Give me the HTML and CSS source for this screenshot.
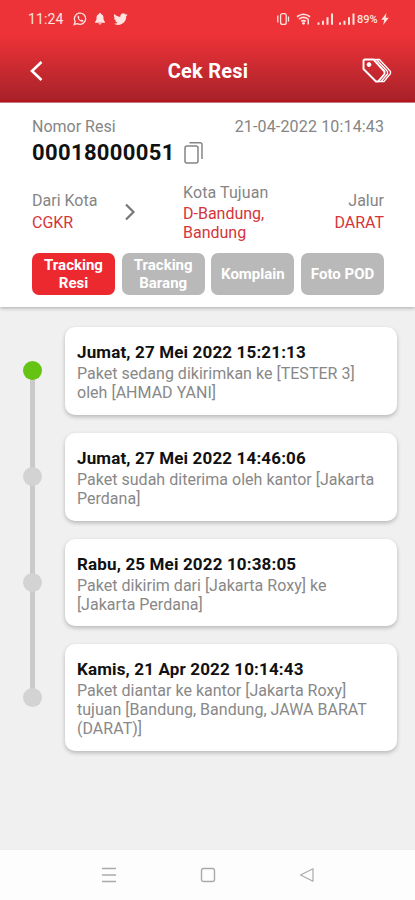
FILE: index.html
```html
<!DOCTYPE html>
<html lang="id">
<head>
<meta charset="utf-8">
<title>Cek Resi</title>
<link rel="stylesheet" href="styles.css">
</head>
<body>
<div class="app">
  <header class="top">
    <div class="status">
      <span class="clock">11:24</span>
      <svg class="apps" width="56" height="14" viewBox="0 0 56 14">
        <path d="M1.2 12.5l1-3A5.6 5.6 0 1 1 4.6 11.700z" fill="none" stroke="currentColor" stroke-width="1.300"/>
        <path d="M4.700 4.100q.4-.6 1-.4l.8 1.700-.6.900q.7 1.300 2 2l.9-.7 1.600.8c.1 1-1 1.600-2 1.400C6.100 9.100 4.200 6.600 4.700 4.100z" fill="currentColor"/>
        <path d="M27 1c.8 0 1 .5 1 1 2 .6 2.500 2.300 2.500 4.300 0 1.700.5 2.500 1.500 3.700v.7H22V10c1-1.200 1.500-2 1.500-3.700 0-2 .5-3.700 2.500-4.300 0-.5.2-1 1-1zM25.500 11.200h3a1.500 1.300 0 0 1-3 0z" fill="currentColor"/>
        <g transform="translate(40.500 .1) scale(.59)"><path d="M23.900 4.600a10 10 0 0 1-2.800.8 5 5 0 0 0 2.100-2.700 10 10 0 0 1-3.100 1.200A4.900 4.900 0 0 0 11.700 8.400 14 14 0 0 1 1.600 3.200a4.900 4.900 0 0 0 1.500 6.600 4.900 4.900 0 0 1-2.200-.6 4.900 4.900 0 0 0 3.900 4.900 5 5 0 0 1-2.200.1 4.900 4.900 0 0 0 4.600 3.400A9.900 9.900 0 0 1 0 19.500 14 14 0 0 0 21.500 7.100a10 10 0 0 0 2.400-2.500z" fill="currentColor"/></g>
      </svg>
      <svg class="signals" width="80" height="14" viewBox="0 0 80 14">
        <g fill="none" stroke="currentColor" stroke-width="1.300">
          <rect x="4.600" y="1.600" width="5.600" height="10.800" rx="2"/>
          <path d="M1.800 3.500v7M12.500 4.500v5"/>
          <path d="M21 4.700q6.500-4.900 13 0M23 7.100q4.500-3.300 9 0M25.200 9.300q2.300-1.500 4.600 0" stroke-width="1.700"/>
        </g>
        <g fill="currentColor">
          <circle cx="27.500" cy="11.300" r="1.400"/>
          <path d="M31.500 12.500V8l1.500-1.500v6z"/>
          <path d="M41.500 10.500h2v2.200h-2zM46 8.800h2v3.900h-2zM50.500 5.300h2v7.400h-2zM55 1.600h2v11.100h-2z"/>
          <path d="M63 10.500h2v2.200h-2zM67.500 8.800h2v3.900h-2zM72 5.300h2v7.400h-2zM76.500 1.600h2v11.100h-2z"/>
        </g>
      </svg>
      <span class="battery">89%</span>
      <svg class="bolt" width="8" height="12" viewBox="0 0 8 12"><path d="M5.500 0L.3 6.700h2.900L2.200 12 7.800 4.800H4.600z" fill="currentColor"/></svg>
    </div>
    <div class="bar">
      <svg width="14" height="22" viewBox="0 0 14 22"><path d="M12.500 2L3 11l9.500 9" fill="none" stroke="currentColor" stroke-width="2.600"/></svg>
      <h1>Cek Resi</h1>
      <svg width="32" height="28" viewBox="0 0 32 28" fill="none" stroke="currentColor" stroke-linejoin="round">
        <path d="M2.500 3.500l1-1h9L23.500 14.500v2.500l-6.500 7.500h-2L2.500 12z" stroke-width="1.900"/>
        <circle cx="8" cy="7.600" r="1.900" fill="currentColor" stroke-width="1"/>
        <path d="M13 2.500h2.500L26.500 14.500V17L20 24.500h-3M16 2.500h2.500l11 12v2L23 24.500h-3" stroke-width="1.300"/>
      </svg>
    </div>
  </header>

  <section class="summary">
    <div class="row head"><span class="label">Nomor Resi</span><span class="label date">21-04-2022 10:14:43</span></div>
    <div class="number">
      <strong>00018000051</strong>
      <svg width="20" height="24" viewBox="0 0 20 24" fill="none" stroke="#858585" stroke-width="1.500"><rect x="1" y="5" width="13" height="17" rx="2"/><path d="M5.500 1.700H16a2 2 0 0 1 2 2V18"/></svg>
    </div>
    <div class="route">
      <div class="from"><div class="label">Dari Kota</div><div class="place">CGKR</div></div>
      <svg class="arrow" width="12" height="18" viewBox="0 0 12 18"><path d="M2 1.500L9.500 9 2 16.500" fill="none" stroke="#777" stroke-width="2.200"/></svg>
      <div class="to"><div class="label">Kota Tujuan</div><div class="place">D-Bandung,<br>Bandung</div></div>
      <div class="via"><div class="label">Jalur</div><div class="place">DARAT</div></div>
    </div>
    <nav class="tabs">
      <button class="tab active">Tracking<br>Resi</button>
      <button class="tab">Tracking<br>Barang</button>
      <button class="tab">Komplain</button>
      <button class="tab">Foto POD</button>
    </nav>
  </section>

  <main class="timeline">
    <article class="event current"><div class="rail"><i class="dot"></i></div><div class="card"><h2>Jumat, 27 Mei 2022 15:21:13</h2><p>Paket sedang dikirimkan ke [TESTER 3]<br>oleh [AHMAD YANI]</p></div></article>
    <article class="event"><div class="rail"><i class="dot"></i></div><div class="card"><h2>Jumat, 27 Mei 2022 14:46:06</h2><p>Paket sudah diterima oleh kantor [Jakarta<br>Perdana]</p></div></article>
    <article class="event"><div class="rail"><i class="dot"></i></div><div class="card"><h2>Rabu, 25 Mei 2022 10:38:05</h2><p>Paket dikirim dari [Jakarta Roxy] ke<br>[Jakarta Perdana]</p></div></article>
    <article class="event"><div class="rail"><i class="dot"></i></div><div class="card"><h2>Kamis, 21 Apr 2022 10:14:43</h2><p>Paket diantar ke kantor [Jakarta Roxy]<br>tujuan [Bandung, Bandung, JAWA BARAT<br>(DARAT)]</p></div></article>
  </main>

  <footer class="softkeys">
    <svg width="16" height="18" viewBox="0 0 16 18" fill="none" stroke="#aaa" stroke-width="1.400"><path d="M1 2.500h14M1 9h14M1 15.500h14"/></svg>
    <svg width="16" height="18" viewBox="0 0 16 18" fill="none" stroke="#aaa" stroke-width="1.400"><rect x="1.500" y="2.500" width="13" height="13" rx="2"/></svg>
    <svg width="16" height="18" viewBox="0 0 16 18" fill="none" stroke="#aaa" stroke-width="1.200" stroke-linejoin="round"><path d="M14 2.800v12.400L1.500 9z"/></svg>
  </footer>
</div>
</body>
</html>
```
FILE: styles.css
```css
* { box-sizing: border-box; }
body { margin: 0; font-family: Roboto, "Liberation Sans", sans-serif; }
h1, h2, p { margin: 0; }
svg { display: block; flex: none; }
.app { width: 415px; height: 900px; display: flex; flex-direction: column; background: #f0f0f0; overflow: hidden; }

.top { height: 103px; flex: none; color: #fff; background: linear-gradient(#ee3338 0, #ee3338 34px, #aa222a 99px, #b5171f 100px, #b5171f 102px, #eee 103px); }
.status { height: 38px; display: flex; align-items: center; padding-left: 28px; color: #ffe3df; }
.clock { width: 45px; font-size: 14px; letter-spacing: .1px; }
.signals { margin-left: 147px; }
.battery { margin-left: 1px; width: 23px; font-size: 11px; letter-spacing: 0; font-weight: 500; white-space: nowrap; }
.bolt { margin-left: 1px; }
.bar { height: 65px; padding: 0 22px 0 29px; display: flex; align-items: center; justify-content: space-between; }
.bar h1 { font-size: 20px; line-height: 24px; font-weight: 700; letter-spacing: .25px; margin-left: 12px; }

.summary { height: 204px; flex: none; padding: 13px 31px 0 32px; background: #fff; box-shadow: 0 1px 4px rgba(0,0,0,.3); }
.label { font-size: 16px; line-height: 21px; color: #858585; }
.date { letter-spacing: .16px; margin-right: -.16px; }
.place { font-size: 16px; line-height: 19px; color: #d4353b; }
.row { display: flex; justify-content: space-between; }
.number { display: flex; align-items: center; gap: 9px; height: 31px; }
.number strong { font-size: 22px; line-height: 28px; font-weight: 700; letter-spacing: .35px; color: #111; }
.route { display: flex; height: 62px; margin-top: 13px; align-items: center; }
.from { width: 92px; }
.to { margin-left: 47px; }
.via { margin-left: auto; text-align: right; }
.from .place, .via .place { line-height: 23px; }
.to .label { line-height: 22px; letter-spacing: .1px; }
.tabs { display: grid; grid-template-columns: repeat(4, 83px); gap: 6.700px; margin-top: 10px; }
.tab { height: 42px; padding: 0; border: 0; border-radius: 7px; background: #b9b9b9; color: #fff; font: 700 15px/18px Roboto, sans-serif; }
.tab.active { background: #ed2930; }

.timeline { flex: 1; padding: 20px 18px 0 23px; display: flex; flex-direction: column; gap: 18px; }
.event { display: flex; gap: 23px; }
.rail { position: relative; width: 19px; display: flex; align-items: center; justify-content: center; }
.rail::before { content: ""; position: absolute; left: 7px; width: 5px; top: -18px; bottom: 0; background: #cacaca; }
.event:first-child .rail::before { top: 50%; }
.event:last-child .rail::before { bottom: 50%; }
.dot { position: relative; width: 19px; height: 19px; border-radius: 50%; background: #d3d3d3; }
.current .dot { background: #64c313; }
.card { flex: 1; padding: 14px 12px 12.800px; border-radius: 10px; background: #fff; box-shadow: 0 2px 4px rgba(0,0,0,.24); }
.card h2 { font-size: 17px; line-height: 23px; font-weight: 700; letter-spacing: .15px; color: #111; white-space: nowrap; }
.card p { font-size: 16px; line-height: 19px; letter-spacing: .02px; color: #888; white-space: nowrap; }

.softkeys { height: 50px; flex: none; display: flex; justify-content: center; align-items: center; gap: 83px; background: #fdfdfd; }
```
